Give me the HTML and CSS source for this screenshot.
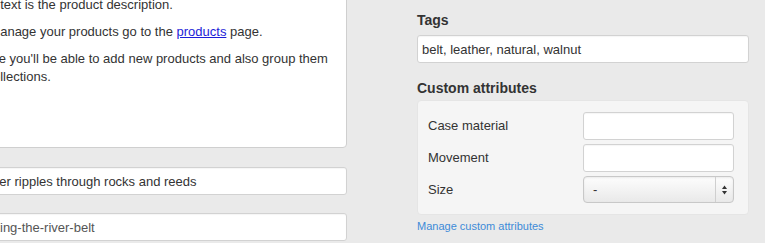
FILE: index.html
```html
<!DOCTYPE html>
<html lang="en">
<head>
  <meta charset="UTF-8">
  <title>Edit product</title>
  <link rel="stylesheet" href="styles.css">
</head>
<body>

  <div class="product-form">
    <div class="main-col">
      <div class="description-editor">
        <p>This text is the product description.</p>
        <p>To manage your products go to the <a href="#">products</a> page.</p>
        <p>There you'll be able to add new products and also group them to collections.</p>
      </div>
      <input class="text-input title-input" type="text" value="A river ripples through rocks and reeds">
      <input class="text-input handle-input" type="text" value="walking-the-river-belt">
    </div>

    <div class="side-col">
      <label class="field-label" for="tags">Tags</label>
      <input class="text-input" id="tags" type="text" value="belt, leather, natural, walnut">

      <h3 class="field-label attrs-title">Custom attributes</h3>
      <div class="attrs-panel">
        <div class="attr-row">
          <label for="caseMaterial">Case material</label>
          <input class="text-input" id="caseMaterial" type="text">
        </div>
        <div class="attr-row">
          <label for="movement">Movement</label>
          <input class="text-input" id="movement" type="text">
        </div>
        <div class="attr-row">
          <label for="size">Size</label>
          <div class="select-wrap">
            <select id="size">
              <option>-</option>
              <option>38mm</option>
              <option>42mm</option>
            </select>
            <span class="select-arrows">
              <svg width="7" height="10" viewBox="0 0 7 10">
                <path d="M3.5 0.5 L6 4 L1 4 Z" fill="#333"/>
                <path d="M3.5 9.5 L6 6 L1 6 Z" fill="#333"/>
              </svg>
            </span>
          </div>
        </div>
      </div>
      <a class="manage-link" href="#">Manage custom attributes</a>
    </div>
  </div>

</body>
</html>
```

FILE: styles.css
```css
* {
  box-sizing: border-box;
}

html, body {
  margin: 0;
  padding: 0;
  overflow: hidden;
}

body {
  font-family: 'Liberation Sans', Arial, Helvetica, sans-serif;
  font-size: 13px;
  line-height: 18px;
  color: #333;
  background-color: #eaeaea;
}

.product-form {
  display: flex;
  gap: 70px;
  margin-left: -31px;
}

.main-col {
  width: 378px;
  margin-top: -10px;
  display: flex;
  flex-direction: column;
}

.description-editor {
  height: 158px;
  background-color: #fff;
  border: 1px solid #cfcfcf;
  border-radius: 0 0 4px 4px;
  padding: 5px 10px 5px 2px;
}

.description-editor p {
  margin: 0 0 9px;
}

.description-editor a {
  color: #1d1dd8;
}

.text-input {
  display: block;
  width: 100%;
  height: 28px;
  padding: 0 4px;
  border: 1px solid #d2d2d2;
  border-radius: 3px;
  background-color: #fff;
  font-family: inherit;
  font-size: 13px;
  color: #333;
  box-shadow: inset 0 1px 1px rgba(0, 0, 0, 0.04);
}

.title-input {
  margin-top: 19px;
}

.handle-input {
  margin-top: 18px;
  color: #555;
}

.side-col {
  width: 332px;
  display: flex;
  flex-direction: column;
}

.field-label {
  display: block;
  margin: 10px 0 5px;
  font-size: 14px;
  font-weight: bold;
  line-height: 20px;
  color: #333;
}

.attrs-title {
  margin: 15px 0 2px;
}

.attrs-panel {
  background-color: #f5f5f5;
  border: 1px solid #e5e5e5;
  border-radius: 4px;
  padding: 11px 14px 11px 10px;
  display: flex;
  flex-direction: column;
  gap: 4px;
}

.attr-row {
  display: flex;
  align-items: center;
  justify-content: space-between;
}

.attr-row label {
  font-size: 13px;
}

.attr-row .text-input,
.select-wrap {
  width: 151px;
}

.select-wrap {
  position: relative;
  height: 27px;
}

.select-wrap select {
  -webkit-appearance: none;
  appearance: none;
  width: 100%;
  height: 27px;
  padding: 0 9px;
  border: 1px solid #c8c8c8;
  border-radius: 4px;
  background: linear-gradient(#fdfdfd, #e9e9e9);
  box-shadow: inset 0 1px 2px rgba(0, 0, 0, 0.08);
  font-family: inherit;
  font-size: 13px;
  color: #333;
}

.select-arrows {
  position: absolute;
  top: 1px;
  right: 1px;
  bottom: 1px;
  width: 18px;
  border-left: 1px solid #cfcfcf;
  display: flex;
  align-items: center;
  justify-content: center;
  pointer-events: none;
}

.manage-link {
  margin-top: 4px;
  font-size: 11px;
  line-height: 14px;
  color: #3d8bd8;
  text-decoration: none;
}
```
